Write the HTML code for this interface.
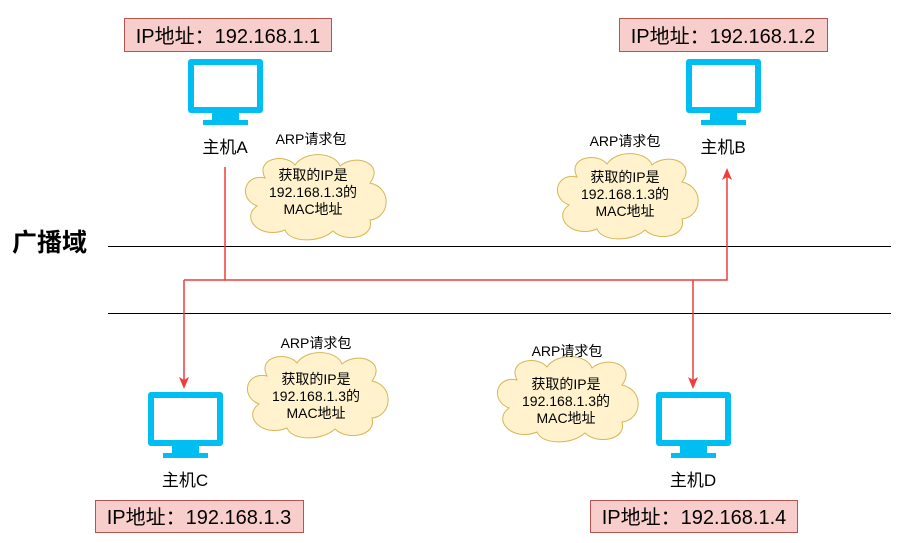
<!DOCTYPE html>
<html><head><meta charset="utf-8"><style>
body{margin:0;background:#fff;width:902px;height:538px;overflow:hidden}
svg text{font-family:"Liberation Sans","Noto Sans CJK SC",sans-serif}
</style></head><body>
<svg width="902" height="538" xmlns="http://www.w3.org/2000/svg">
<defs>
<g id="mon">
<rect x="0" y="0" width="75" height="54" rx="3" fill="#00BEF2"/>
<rect x="6" y="6" width="63" height="42" fill="#fff"/>
<path d="M24 54 L51 54 L51 61 L60 61 L60 66 L15 66 L15 61 L24 61 Z" fill="#00BEF2"/>
</g>
<g id="cloud">
<path d="M-50 -20 C-60 -40 -30 -45 -20 -33 C-10 -48 20 -46 25 -32 C40 -45 70 -35 55 -15 C78 -10 75 20 55 22 C60 40 30 45 18 33 C5 45 -25 45 -30 32 C-55 42 -75 20 -58 8 C-78 0 -70 -25 -50 -20 Z" fill="#FFF2CC" stroke="#D6B656" stroke-width="1"/>
</g>
</defs>
<line x1="108" y1="246.5" x2="891" y2="246.5" stroke="#000" stroke-width="1"/>
<line x1="108" y1="313.5" x2="891" y2="313.5" stroke="#000" stroke-width="1"/>
<text x="12" y="251" font-size="25" font-weight="bold">广播域</text>
<g stroke="#F03C3C" stroke-width="1.5" fill="none">
<path d="M225 167 L225 280 L727 280 L727 176"/>
<path d="M184 280 L225 280"/>
<path d="M184 280 L184 380"/>
<path d="M693 280 L693 380"/>
</g>
<g fill="#F03C3C">
<path d="M727 168 L722 180 L727 177 L732 180 Z"/>
<path d="M184 389 L179 377 L184 380 L189 377 Z"/>
<path d="M693 389 L688 377 L693 380 L698 377 Z"/>
</g>
<use href="#mon" x="188" y="59"/>
<use href="#mon" x="686" y="59"/>
<use href="#mon" x="148" y="392"/>
<use href="#mon" x="656" y="392"/>
<g font-size="17" fill="#000" text-anchor="middle">
<text x="225" y="153">主机A</text>
<text x="723" y="153">主机B</text>
<text x="185" y="486">主机C</text>
<text x="693" y="486">主机D</text>
</g>
<g fill="#F8CECC" stroke="#B85450">
<rect x="124.5" y="18.5" width="207" height="33"/>
<rect x="619.5" y="18.5" width="208" height="33"/>
<rect x="95.5" y="500.5" width="208" height="32"/>
<rect x="590.5" y="500.5" width="207" height="32"/>
</g>
<g font-size="20" text-anchor="middle" fill="#000">
<text x="228" y="43">IP地址：192.168.1.1</text>
<text x="723" y="43">IP地址：192.168.1.2</text>
<text x="199" y="524">IP地址：192.168.1.3</text>
<text x="694" y="524">IP地址：192.168.1.4</text>
</g>
<use href="#cloud" x="315" y="198"/>
<use href="#cloud" x="627" y="197"/>
<use href="#cloud" x="317" y="396"/>
<use href="#cloud" x="567" y="400"/>
<g font-size="14" text-anchor="middle" fill="#000">
<text x="311" y="144">ARP请求包</text>
<text x="313" y="180">获取的IP是</text><text x="313" y="197">192.168.1.3的</text><text x="313" y="214">MAC地址</text>
<text x="625" y="146">ARP请求包</text>
<text x="625" y="182">获取的IP是</text><text x="625" y="199">192.168.1.3的</text><text x="625" y="216">MAC地址</text>
<text x="316" y="348">ARP请求包</text>
<text x="316" y="384">获取的IP是</text><text x="316" y="401">192.168.1.3的</text><text x="316" y="418">MAC地址</text>
<text x="567" y="356">ARP请求包</text>
<text x="566" y="389">获取的IP是</text><text x="566" y="406">192.168.1.3的</text><text x="566" y="423">MAC地址</text>
</g>
</svg>
</body></html>
